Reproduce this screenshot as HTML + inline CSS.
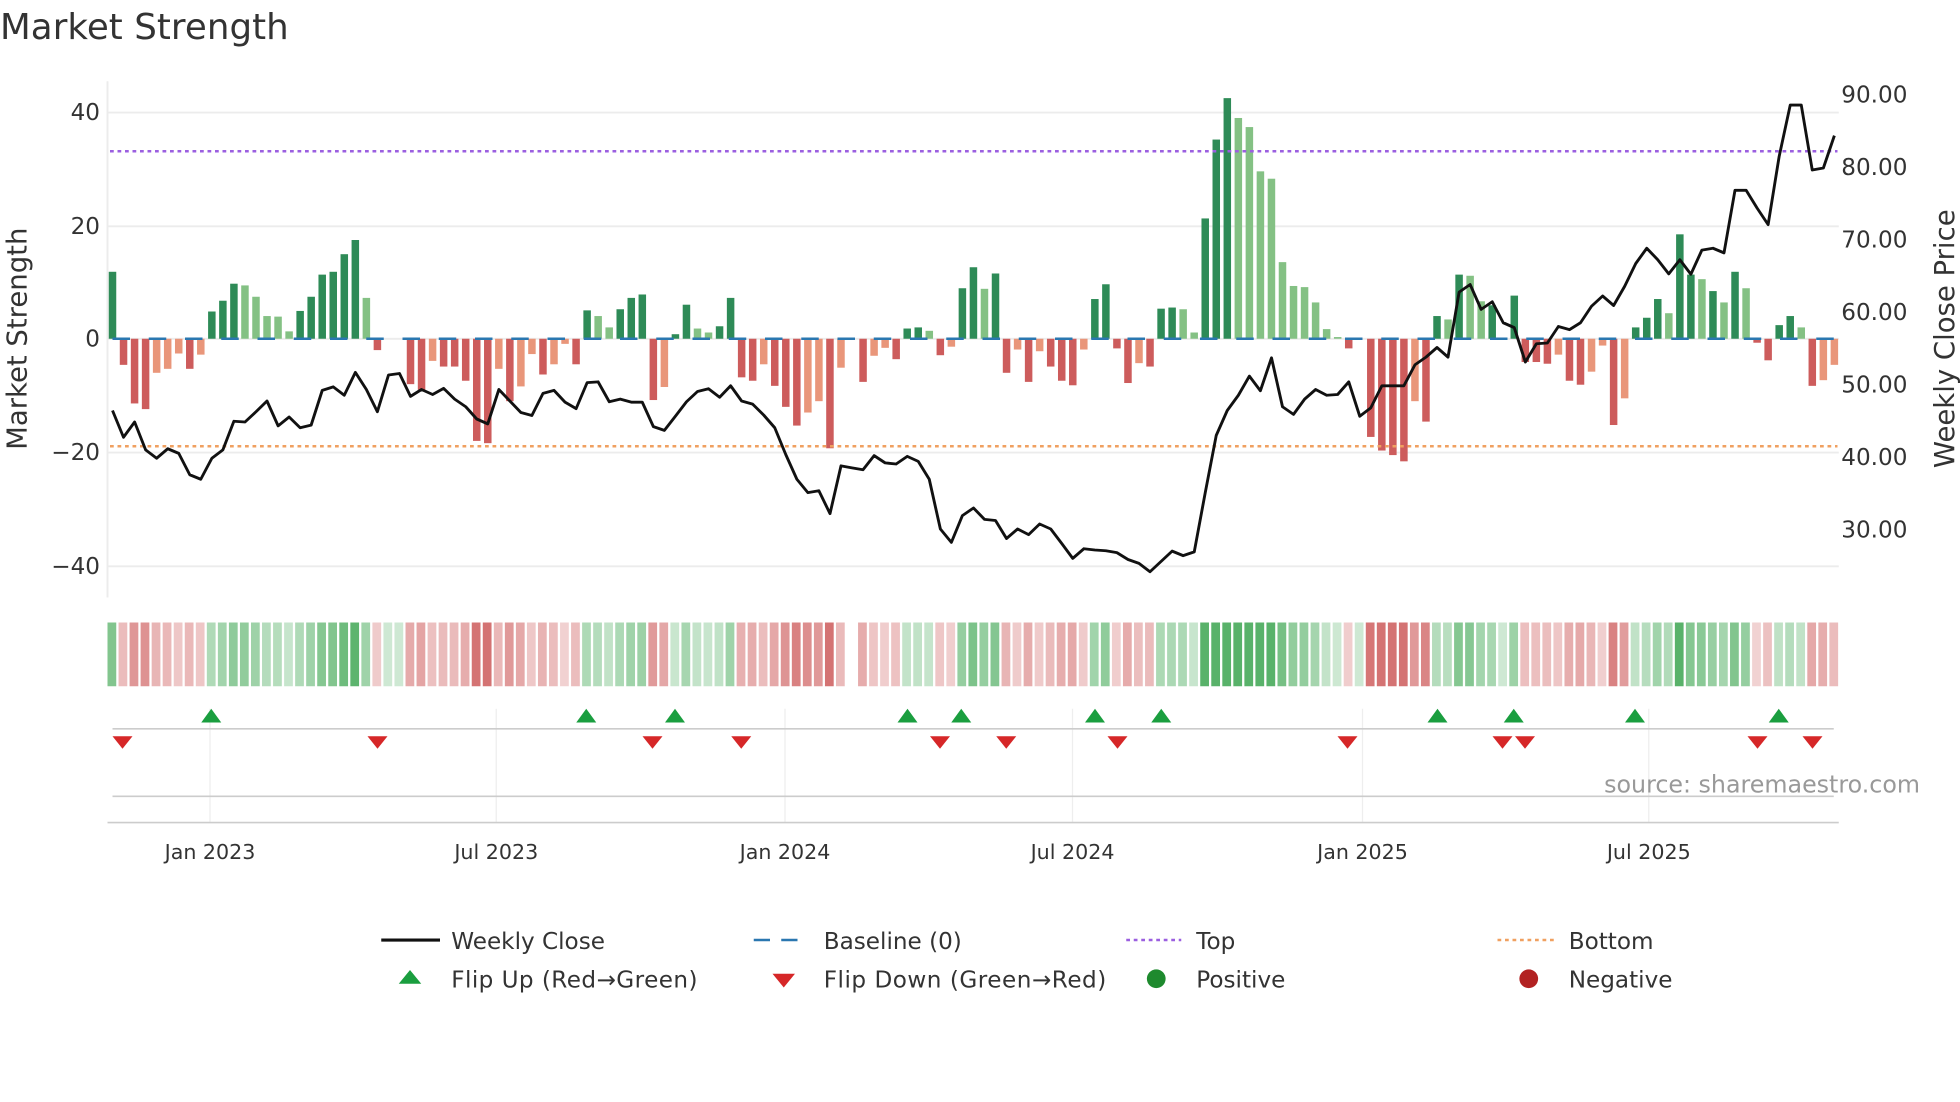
<!DOCTYPE html>
<html><head><meta charset="utf-8"><style>
html,body{margin:0;padding:0;background:#fff;}
svg{display:block;font-family:"DejaVu Sans","Liberation Sans",sans-serif;}
</style></head><body>
<svg id="s" width="1960" height="1102" viewBox="0 0 1568 881.6" xmlns="http://www.w3.org/2000/svg">
<rect width="1568" height="882" fill="#fff"/>
<text x="0" y="31" font-size="28.5" fill="#333" textLength="231">Market Strength</text>
<g stroke="#ececec" stroke-width="1.5">
<line x1="86" x2="1471" y1="90" y2="90"/><line x1="86" x2="1471" y1="181" y2="181"/>
<line x1="86" x2="1471" y1="271" y2="271"/><line x1="86" x2="1471" y1="362" y2="362"/>
<line x1="86" x2="1471" y1="453" y2="453"/>
</g>
<line x1="86" x2="86" y1="65" y2="478" stroke="#ececec" stroke-width="1.5"/>
<g font-size="18.5" fill="#333" text-anchor="end">
<text x="80" y="96">40</text><text x="80" y="187">20</text><text x="80" y="277">0</text>
<text x="80" y="368">−20</text><text x="80" y="459">−40</text>
</g>
<g font-size="18.5" fill="#333">
<text x="1473" y="82">90.00</text><text x="1473" y="140">80.00</text><text x="1473" y="198">70.00</text>
<text x="1473" y="256">60.00</text><text x="1473" y="314">50.00</text><text x="1473" y="372">40.00</text>
<text x="1473" y="430">30.00</text>
</g>
<text transform="translate(21,271) rotate(-90)" font-size="22" fill="#333" text-anchor="middle">Market Strength</text>
<text transform="translate(1563,271) rotate(-90)" font-size="22" fill="#333" text-anchor="middle">Weekly Close Price</text>
<g id="bars"></g>
<line x1="90" x2="1467" y1="271" y2="271" stroke="#2a77b0" stroke-width="2" stroke-dasharray="14 15"/>
<line x1="88" x2="1470" y1="121" y2="121" stroke="#9b5fe0" stroke-width="2" stroke-dasharray="3 3"/>
<line x1="88" x2="1470" y1="357" y2="357" stroke="#f0a060" stroke-width="2" stroke-dasharray="3 3"/>
<polyline id="price" fill="none" stroke="#111" stroke-width="2.3" stroke-linejoin="round"/>
<g id="strip"></g>
<g stroke="#eee" stroke-width="1">
<line x1="168" x2="168" y1="567" y2="658"/><line x1="397" x2="397" y1="567" y2="658"/>
<line x1="628" x2="628" y1="567" y2="658"/><line x1="858" x2="858" y1="567" y2="658"/>
<line x1="1090" x2="1090" y1="567" y2="658"/><line x1="1319" x2="1319" y1="567" y2="658"/>
</g>
<line x1="90" x2="1467" y1="583" y2="583" stroke="#ccc" stroke-width="1.3"/>
<line x1="90" x2="1467" y1="637" y2="637" stroke="#ccc" stroke-width="1.3"/>
<line x1="86" x2="1471" y1="658" y2="658" stroke="#ccc" stroke-width="1.3"/>
<g id="flips"></g>
<text x="1536" y="634" font-size="19" fill="#999" text-anchor="end">source: sharemaestro.com</text>
<g font-size="16.5" fill="#333" text-anchor="middle">
<text x="168" y="687">Jan 2023</text><text x="397" y="687">Jul 2023</text><text x="628" y="687">Jan 2024</text>
<text x="858" y="687">Jul 2024</text><text x="1090" y="687">Jan 2025</text><text x="1319" y="687">Jul 2025</text>
</g>
<g font-size="18.5" fill="#333">
<line x1="305" x2="352" y1="752" y2="752" stroke="#111" stroke-width="2.5"/>
<text x="361" y="759">Weekly Close</text>
<line x1="603" x2="647" y1="752" y2="752" stroke="#2a77b0" stroke-width="2" stroke-dasharray="13 9"/>
<text x="659" y="759">Baseline (0)</text>
<line x1="901" x2="945" y1="752" y2="752" stroke="#9b5fe0" stroke-width="2" stroke-dasharray="3 3"/>
<text x="957" y="759">Top</text>
<line x1="1198" x2="1243" y1="752" y2="752" stroke="#f0a060" stroke-width="2" stroke-dasharray="3 3"/>
<text x="1255" y="759">Bottom</text>
<polygon points="328,776 319,787 337,787" fill="#1a9e3f"/>
<text x="361" y="790" textLength="197">Flip Up (Red→Green)</text>
<polygon points="618,779 636,779 627,790" fill="#d62728"/>
<text x="659" y="790" textLength="226">Flip Down (Green→Red)</text>
<circle cx="925" cy="783" r="7.5" fill="#1e8a2e"/>
<text x="957" y="790">Positive</text>
<circle cx="1223" cy="783" r="7.5" fill="#b22222"/>
<text x="1255" y="790">Negative</text>
</g>
</svg>
<script>
var NS="http://www.w3.org/2000/svg";
function el(t,a,p){var e=document.createElementNS(NS,t);for(var k in a)e.setAttribute(k,a[k]);p.appendChild(e);return e;}
var B="G11.8 R-4.6 R-11.4 R-12.4 r-6 r-5.3 r-2.6 R-5.3 r-2.8 G4.8 G6.7 G9.7 g9.4 g7.4 g4 g3.9 g1.3 G4.9 G7.4 G11.3 G11.8 G14.9 G17.4 g7.2 R-2 0 0 R-8 R-9 r-3.9 R-4.9 R-4.9 R-7.4 R-18 R-18.4 r-5.3 R-11 r-8.4 r-2.7 R-6.3 r-4.5 r-0.9 R-4.5 G5 g4 g2 G5.2 G7.2 G7.8 R-10.8 r-8.5 G0.8 G6 g1.8 g1.1 G2.2 G7.2 R-6.8 R-7.4 r-4.5 R-8.3 R-12 R-15.3 r-13 r-11 R-19.3 r-5.1 0 R-7.6 r-3 r-1.6 R-3.6 G1.8 G2 g1.4 R-2.9 r-1.4 G8.9 G12.6 g8.8 G11.5 R-6 r-1.9 R-7.6 r-2.2 R-4.9 R-7.4 R-8.2 r-1.9 G7 G9.6 R-1.7 R-7.8 r-4.3 R-4.9 G5.3 G5.5 g5.2 g1.1 G21.2 G35.1 G42.4 g38.9 g37.3 g29.5 g28.2 g13.5 g9.3 g9.1 g6.4 g1.7 g0.3 R-1.7 0 R-17.3 R-19.7 R-20.5 R-21.6 r-11 R-14.6 G4 g3.4 G11.3 g11.1 g6.6 G5.9 0 G7.6 R-4.1 R-4.1 R-4.4 r-2.8 R-7.4 R-8.1 r-5.8 r-1.2 R-15.2 r-10.5 G2 G3.7 G7 g4.5 G18.4 G11.3 g10.5 G8.4 g6.4 G11.8 g8.9 R-0.7 R-3.8 G2.4 G4 g2 R-8.3 r-7.3 r-4.6".split(" ");
var P1=[1075,1145,1105,1178,1200,1175,1187,1243,1255,1200,1178,1103,1105,1078,1050,1115,1092,1120,1113,1022,1013,1035,975,1020,1078,982,978,1038,1020,1033,1017,1045,1065,1097,1110,1020,1050,1080,1088,1030,1022,1053,1070,1002,1000,1052,1045,1053,1053,1117,1127,1090,1052,1025,1018,1040,1010,1050,1058,1087,1120,1190,1255,1290,1285,1345,1220,1225,1230,1193,1212,1215,1195,1208,1255,1385,1420,1350,1330];
var P2=[1360,1363,1410,1385,1400,1372,1385,1423,1462,1437,1440,1442,1447,1465,1475,1497,1470,1443,1455,1445,1290,1140,1075,1035,985,1023,937,1065,1085,1045,1020,1035,1033,1000,1090,1068,1010,1010,1010,955,935,910,935,765,745,810,790,845,858,948,900,898,855,863,845,802,775,800,750,690,650,680,717,680,718,655,650,662,498,498,545,588,410,275,275,445,440,355];
var P=P1.concat(P2);
var n=B.length,x0=90,step=(1467.5-90)/(n-1);
var col={G:"#2e8b57",g:"#84c184",R:"#cd5c5c",r:"#e9967a"};
var bars=document.getElementById("bars"),strip=document.getElementById("strip");
for(var i=0;i<n;i++){
 var t=B[i],c=t[0],v=parseFloat(c=="0"?0:t.slice(1));var x=x0+i*step;
 if(v!=0){var y=271-4.54*v;el("rect",{x:x-3,y:Math.min(y,271),width:6,height:Math.abs(271-y),fill:col[c]},bars);}
 var pos=(c=="G"||c=="g")?1:(c=="R"||c=="r")?-1:0;
 if(x>676&&x<687)continue;
 var a=Math.min(0.85,0.25+Math.abs(v)/30);
 var fill=pos>=0?"rgba(60,165,80,"+a+")":"rgba(205,90,90,"+a+")";
 el("rect",{x:x-4,y:498,width:7,height:51,fill:fill},strip);
}
var pts=[];for(var i=0;i<P.length;i++)pts.push((x0+i*step).toFixed(1)+","+(P[i]/3.273).toFixed(1));
document.getElementById("price").setAttribute("points",pts.join(" "));
var F=document.getElementById("flips");
[169,469,540,726,769,876,929,1150,1211,1308,1423].forEach(function(x){el("polygon",{points:(x)+",567 "+(x-8)+",578 "+(x+8)+",578",fill:"#1a9e3f"},F);});
[98,302,522,593,752,805,894,1078,1202,1220,1406,1450].forEach(function(x){el("polygon",{points:(x-8)+",589 "+(x+8)+",589 "+x+",599",fill:"#d62728"},F);});
</script>
</body></html>
